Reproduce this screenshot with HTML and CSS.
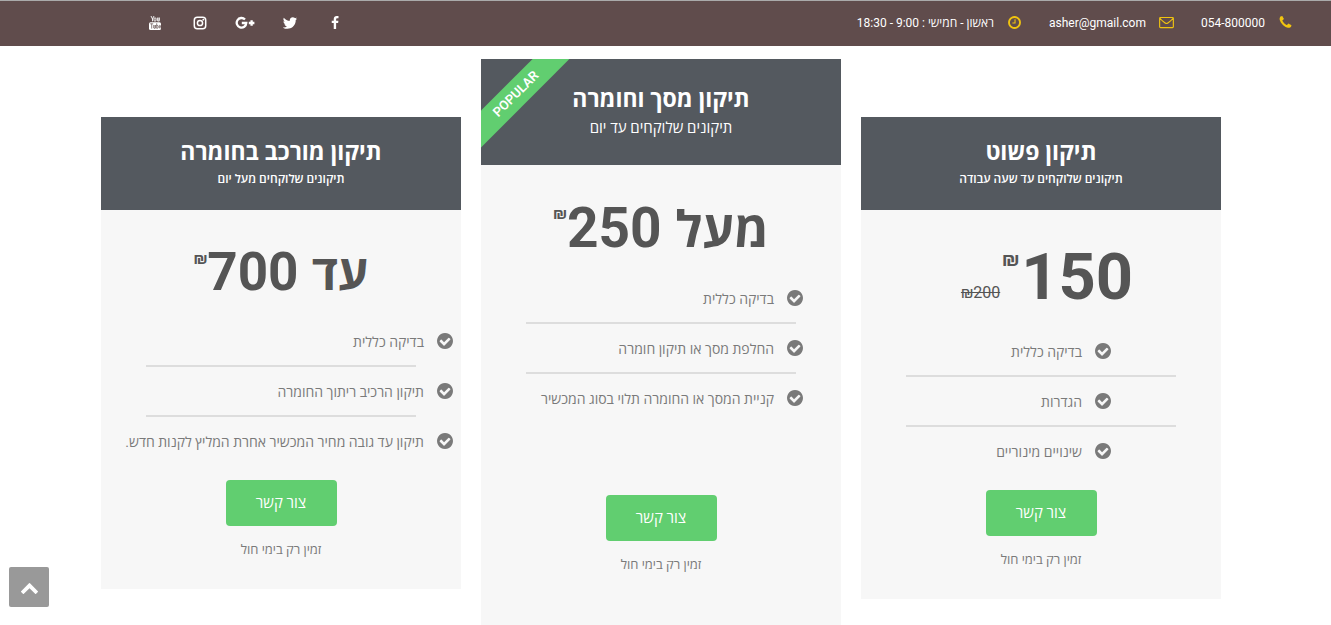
FILE: index.html
```
<!DOCTYPE html>
<html lang="he" dir="rtl">
<head>
  <meta charset="UTF-8">
  <meta name="viewport" content="width=device-width, initial-scale=1.0">
  <title>מחירון תיקונים</title>
  <link rel="stylesheet" href="styles.css">
</head>
<body>
  <!-- Shared icons -->
  <svg class="sprite" aria-hidden="true">
    <symbol id="check" viewBox="128 128 1536 1536"><path d="M1412 734q0-28-18-46l-91-90q-19-19-45-19t-45 19l-408 407-226-226q-19-19-45-19t-45 19l-91 90q-18 18-18 46 0 27 18 45l362 362q19 19 45 19 27 0 46-19l543-543q18-18 18-45zm252 162q0 209-103 385.5t-279.5 279.5-385.5 103-385.5-103-279.5-279.5-103-385.5 103-385.5 279.5-279.5 385.5-103 385.5 103 279.5 279.5 103 385.5z"/></symbol>
  </svg>

  <header class="topbar">
    <ul class="contact">
      <li>
        <svg class="icon" viewBox="0 0 1792 1792"><path d="M1600 1240q0 27-10 70.5t-21 68.5q-21 50-122 106-94 51-186 51-27 0-53-3.5t-57.5-12.5-47-14.5-55.5-20.5-49-18q-98-35-175-83-127-79-264-216t-216-264q-48-77-83-175-3-9-18-49t-20.5-55.5-14.5-47-12.5-57.5-3.5-53q0-92 51-186 56-101 106-122 25-11 68.5-21t70.5-10q14 0 21 3 18 6 53 76 11 19 30 54t35 63.5 31 53.5q3 4 17.5 25t21.5 35.5 7 28.5q0 20-28.5 50t-62 55-62 53-28.5 46q0 9 5 22.5t8.5 20.5 14 24 11.5 19q76 137 174 235t235 174q2 1 19 11.5t24 14 20.5 8.5 22.5 5q18 0 46-28.5t53-62 55-62 50-28.5q14 0 28.5 7t35.5 21.5 25 17.5q25 15 53.5 31t63.5 35 54 30q70 35 76 53 3 7 3 21z"/></svg>
        <a href="tel:054800000">054-800000</a>
      </li>
      <li>
        <svg class="icon" viewBox="0 0 16 16"><path d="M1.6 2.6h12.8a.9.9 0 0 1 .9.9v9a.9.9 0 0 1-.9.9H1.600a.9.9 0 0 1-.9-.9v-9a.9.9 0 0 1 .9-.9zM1 3.500c1.500 2 4 3.800 5.700 5.100.9.700 1.700.700 2.600 0C11 7.300 13.500 5.500 15 3.500" fill="none" stroke="currentColor" stroke-width="1.200"/></svg>
        <a href="mailto:asher@gmail.com">asher@gmail.com</a>
      </li>
      <li>
        <svg class="icon" viewBox="0 0 1792 1792"><path d="M1024 544v448q0 14-9 23t-23 9h-320q-14 0-23-9t-9-23v-64q0-14 9-23t23-9h224v-352q0-14 9-23t23-9h64q14 0 23 9t9 23zm416 352q0-148-73-273t-198-198-273-73-273 73-198 198-73 273 73 273 198 198 273 73 273-73 198-198 73-273zm224 0q0 209-103 385.5t-279.5 279.5-385.5 103-385.5-103-279.5-279.5-103-385.5 103-385.5 279.5-279.5 385.5-103 385.5 103 279.5 279.5 103 385.5z"/></svg>
        <span>ראשון - חמישי : 9:00 - 18:30</span>
      </li>
    </ul>

    <nav class="social" aria-label="רשתות חברתיות">
      <a href="#" aria-label="Facebook"><svg viewBox="0 0 1792 1792"><path d="M1343 12v264h-157q-86 0-116 36t-30 108v189h293l-39 296h-254v759h-306v-759h-255v-296h255v-218q0-186 104-288.5t277-102.5q147 0 228 12z"/></svg></a>
      <a href="#" aria-label="Twitter"><svg viewBox="128 128 1536 1536"><path d="M1684 408q-67 98-162 167 1 14 1 42 0 130-38 259.5t-115.5 248.5-184.5 210.5-258 146-323 54.5q-271 0-496-145 35 4 78 4 225 0 401-138-105-2-188-64.5t-114-159.5q33 5 61 5 43 0 85-11-112-23-185.5-111.5t-73.5-205.5v-4q68 38 146 41-66-44-105-115t-39-154q0-88 44-163 121 149 294.5 238.5t371.5 99.5q-8-38-8-74 0-134 94.5-228.5t228.5-94.5q140 0 236 102 109-21 205-78-37 115-142 178 93-10 186-50z"/></svg></a>
      <a href="#" aria-label="Google Plus"><svg class="wide" viewBox="0 0 20 14"><path d="M10 3.500A4.800 4.800 0 1 0 11.300 7H6.800M16.600 4.200v5.600M13.800 7h5.600" fill="none" stroke="currentColor" stroke-width="2.300"/></svg></a>
      <a href="#" aria-label="Instagram"><svg viewBox="0 0 14 14"><rect x="1.300" y="1.300" width="11.400" height="11.400" rx="3" fill="none" stroke="currentColor" stroke-width="1.500"/><circle cx="7" cy="7" r="2.600" fill="none" stroke="currentColor" stroke-width="1.500"/><circle cx="10.300" cy="3.700" r=".9"/></svg></a>
      <a href="#" aria-label="YouTube"><svg viewBox="0 0 14 14"><path d="M3 0l1.500 3v2.300M6 0L4.500 3M7 1.800a1 1 0 0 1 1 1v1.400a1 1 0 0 1-2 0V2.800a1 1 0 0 1 1-1zM9.400 1.600v3.200q.9.700 1.700-.300V1.600v3.700" fill="none" stroke="currentColor" stroke-width=".9"/><rect x="1" y="6.200" width="12" height="7.800" rx="1.500"/><path class="cut" d="M2.200 7.800h3M3.700 7.800v4.800M5.700 9v3q.8.900 1.500-.200V9v3.500M8.700 7.300v5.100M8.700 9.500q1.400-.5 1.400.7v1.300q0 1-1.400.7M11.300 10.800h1.300q0-1.600-.700-1.600t-.700 1.500q0 1.500.7 1.500t.8-.7"/></svg></a>
    </nav>
  </header>

  <main class="plans">
    <section class="plan plan-simple">
      <div class="plan-header">
        <h3>תיקון פשוט</h3>
        <p>תיקונים שלוקחים עד שעה עבודה</p>
      </div>
      <div class="price">
        <span class="amount">150</span>
        <span class="currency">₪</span>
        <del>₪200</del>
      </div>
      <ul class="features">
        <li><div class="feature"><svg><use href="#check"/></svg>בדיקה כללית</div></li>
        <li><div class="feature"><svg><use href="#check"/></svg>הגדרות</div></li>
        <li><div class="feature"><svg><use href="#check"/></svg>שינויים מינוריים</div></li>
      </ul>
      <div class="plan-footer">
        <a class="button" href="#">צור קשר</a>
        <p>זמין רק בימי חול</p>
      </div>
    </section>

    <section class="plan plan-popular">
      <div class="ribbon"><div class="ribbon-inner">POPULAR</div></div>
      <div class="plan-header">
        <h3>תיקון מסך וחומרה</h3>
        <p>תיקונים שלוקחים עד יום</p>
      </div>
      <div class="price">
        <span class="amount"><span class="prefix">מעל</span> 250</span>
        <span class="currency">₪</span>
      </div>
      <ul class="features">
        <li><div class="feature"><svg><use href="#check"/></svg>בדיקה כללית</div></li>
        <li><div class="feature"><svg><use href="#check"/></svg>החלפת מסך או תיקון חומרה</div></li>
        <li><div class="feature"><svg><use href="#check"/></svg>קניית המסך או החומרה תלוי בסוג המכשיר</div></li>
      </ul>
      <div class="plan-footer">
        <a class="button" href="#">צור קשר</a>
        <p>זמין רק בימי חול</p>
      </div>
    </section>

    <section class="plan plan-complex">
      <div class="plan-header">
        <h3>תיקון מורכב בחומרה</h3>
        <p>תיקונים שלוקחים מעל יום</p>
      </div>
      <div class="price">
        <span class="amount"><span class="prefix">עד</span> 700</span>
        <span class="currency">₪</span>
      </div>
      <ul class="features">
        <li><div class="feature"><svg><use href="#check"/></svg>בדיקה כללית</div></li>
        <li><div class="feature"><svg><use href="#check"/></svg>תיקון הרכיב ריתוך החומרה</div></li>
        <li><div class="feature"><svg><use href="#check"/></svg>תיקון עד גובה מחיר המכשיר אחרת המליץ לקנות חדש.</div></li>
      </ul>
      <div class="plan-footer">
        <a class="button" href="#">צור קשר</a>
        <p>זמין רק בימי חול</p>
      </div>
    </section>
  </main>

  <a class="to-top" href="#" aria-label="חזרה למעלה">
    <svg viewBox="0 0 1792 1792"><path d="M1683 1331l-166 165q-19 19-45 19t-45-19l-531-531-531 531q-19 19-45 19t-45-19l-166-165q-19-19-19-45.5t19-45.5l742-741q19-19 45-19t45 19l742 741q19 19 19 45.5t-19 45.5z"/></svg>
  </a>
</body>
</html>
```
FILE: styles.css
```
* {
  box-sizing: border-box;
}
body {
  margin: 0;
  font-family: Roboto, "Open Sans", sans-serif;
  color: #7a7a7a;
  background: #fff;
}
h3, p, ul {
  margin: 0;
  padding: 0;
}
ul {
  list-style: none;
}
a {
  color: inherit;
  text-decoration: none;
}
svg {
  display: block;
  flex: none;
  fill: currentColor;
}
.sprite {
  position: absolute;
  width: 0;
  height: 0;
}

/* Top bar */
.topbar {
  display: flex;
  align-items: center;
  justify-content: space-between;
  height: 46px;
  padding: 0 38px 2px 132px;
  background: #604c4c;
  border-top: 1px solid #aaa;
  color: #fff;
  font-size: 12px;
}
.contact {
  display: flex;
  gap: 27px;
}
.contact li {
  display: flex;
  align-items: center;
  gap: 13px;
}
.contact .icon {
  width: 15px;
  height: 15px;
  color: #f1c40f;
}
.social {
  display: flex;
}
.social a {
  display: flex;
  align-items: center;
  justify-content: center;
  width: 45px;
}
.social svg {
  width: 14px;
  height: 14px;
}
.social .wide {
  width: 20px;
}
.social .cut {
  fill: none;
  stroke: #604c4c;
  stroke-width: 0.7;
}

/* Pricing tables */
.plans {
  display: flex;
  align-items: flex-start;
  justify-content: center;
  gap: 20px;
  padding: 13px 9px 0 0;
}
.plan {
  position: relative;
  flex: 0 1 360px;
  margin-top: 58px;
  background: #f7f7f7;
  text-align: center;
}
.plan-popular {
  margin-top: 0;
}
.plan-header {
  padding: 22px 0 19px;
  background: #54595f;
  color: #fff;
}
.plan-header h3 {
  font-size: 23px;
  font-weight: 700;
  line-height: 28px;
}
.plan-header p {
  font-size: 12px;
  font-weight: 600;
  line-height: 24px;
}
.plan-popular .plan-header {
  padding: 27px 0 23px;
}
.plan-popular .plan-header p {
  font-size: 15px;
  font-weight: 400;
  line-height: 28px;
}
.price {
  display: flex;
  justify-content: center;
  padding: 41px 0 24px;
  color: #555;
}
.amount {
  font-size: 55px;
  font-weight: 700;
  line-height: 44px;
}
.prefix {
  font-size: 50px;
  line-height: 20px;
}
.currency {
  font-size: 16px;
  font-weight: 600;
  line-height: 16px;
}
.plan-simple .price {
  padding-left: 12px;
}
.plan-simple .amount {
  font-size: 65px;
  line-height: 52px;
}
.plan-simple .currency {
  margin: 0 2px;
  font-size: 20px;
}
.plan-complex .amount {
  font-size: 53px;
  line-height: 42px;
}
.plan-complex .prefix {
  font-size: 48px;
  line-height: 20px;
}
.price del {
  align-self: flex-end;
  font-size: 16px;
  line-height: 20px;
}

.features li + li::before {
  content: "";
  display: block;
  margin: 0 45px;
  border-top: 2px solid #ddd;
}
.feature {
  display: flex;
  align-items: center;
  gap: 13px;
  height: 48px;
  font-size: 14px;
  white-space: nowrap;
}
.feature svg {
  width: 16px;
  height: 16px;
}
.plan-simple .feature {
  padding-right: 110px;
}
.plan-popular .feature {
  padding-right: 38px;
}
.plan-complex .feature {
  padding-right: 8px;
}

.plan-footer {
  padding: 15px 0 29px;
}
.plan-popular .plan-footer {
  padding: 73px 0 58px;
}
.button {
  display: inline-block;
  min-width: 111px;
  border-radius: 4px;
  background: #61ce70;
  color: #fff;
  font-size: 15px;
  font-weight: 500;
  line-height: 46px;
  vertical-align: top;
}
.plan-footer p {
  margin-top: 14px;
  font-size: 13px;
  line-height: 20px;
}

.ribbon {
  position: absolute;
  top: 0;
  left: 0;
  width: 100px;
  height: 100px;
  overflow: hidden;
}
.ribbon-inner {
  position: absolute;
  top: 22px;
  left: -40px;
  width: 150px;
  transform: rotate(-45deg);
  background: #61ce70;
  color: #fff;
  font-size: 13px;
  font-weight: 600;
  line-height: 26px;
}

/* Back to top */
.to-top {
  position: fixed;
  left: 9px;
  bottom: 18px;
  display: flex;
  align-items: center;
  justify-content: center;
  width: 40px;
  height: 40px;
  border-radius: 2px;
  background: #999;
  color: #fff;
}
.to-top svg {
  width: 19px;
  height: 19px;
}
```
